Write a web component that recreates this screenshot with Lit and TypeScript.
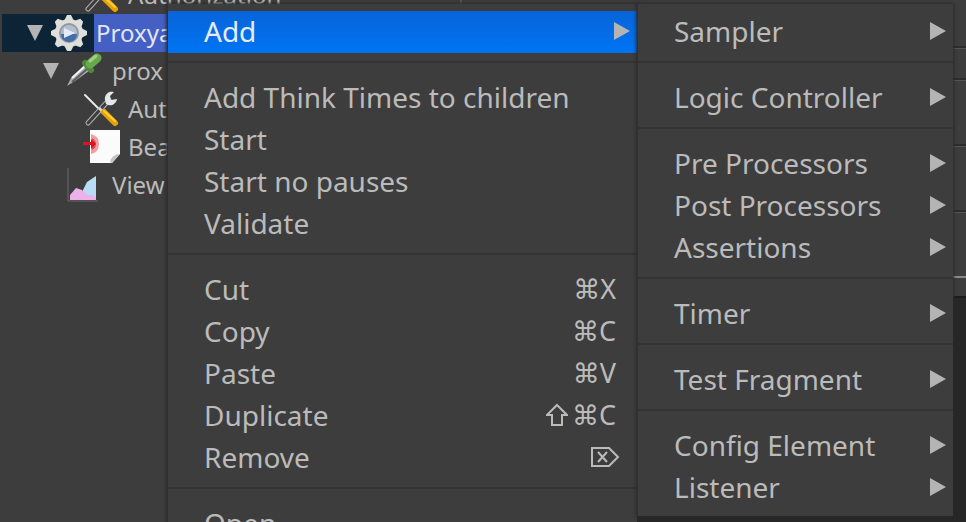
import { LitElement, html, css, svg, nothing, TemplateResult } from "lit";
import { customElement, property } from "lit/decorators.js";

interface Entry {
  label: string;
  keys?: string[];
  submenu?: boolean;
  active?: boolean;
}
type Item = Entry | "separator";

interface Node {
  label: string;
  icon: TemplateResult;
  level: number;
  open?: boolean;
  selected?: boolean;
}

const tools = html`<svg class="icon" viewBox="0 0 38 38" aria-hidden="true">
  <path d="M3 5L18 20" stroke="#e8e8e8" stroke-width="2" stroke-linecap="round" />
  <path d="M6 33L27 10" stroke="#b4b4b4" stroke-width="5" stroke-linecap="round" />
  <path d="M6 33L25 12" stroke="#3c3c3c" stroke-width="3" stroke-linecap="round" />
  <path d="M23 10a7 7 0 0 1 9-8l-4 4 1 4 6-1a7 7 0 0 1-11 5z" fill="#e4e8ea" />
  <path d="M17 18L22 23" stroke="#d8d8d8" stroke-width="3" />
  <path d="M22 22L33 33" stroke="#e8a208" stroke-width="6" stroke-linecap="round" />
  <path d="M22 21L33 31" stroke="#ffd03a" stroke-width="2" stroke-linecap="round" />
</svg>`;

const teeth = [0, 45, 90, 135, 180, 225, 270, 315];
const gear = html`<svg class="icon" viewBox="0 0 38 38" aria-hidden="true">
  <g fill="#dededa">
    ${teeth.map((a) => svg`<path d="M14 7L17 1h4l3 6z" transform="rotate(${a} 19 19)" />`)}
    <circle cx="19" cy="19" r="14" />
  </g>
  <circle cx="19" cy="19" r="10" fill="#9298a2" />
  <circle cx="19" cy="19" r="8" fill="#b4bfce" />
  <path d="M11 20a8 8 0 0 0 16 0z" fill="#426da9" />
  <path d="M14 14l11 5-11 5z" fill="#e4ecfa" />
</svg>`;

const dropper = html`<svg class="icon" viewBox="0 0 38 38" aria-hidden="true">
  <path d="M1 34L5 26 18 14l5 5L9 29z" fill="#a9adb0" />
  <path d="M6 30L21 17" stroke="#5a5d60" stroke-width="2" />
  <path d="M6 26L19 14" stroke="#f4f4f4" stroke-width="2" />
  <path d="M19 11l6 7" stroke="#4c8a35" stroke-width="6" stroke-linecap="round" />
  <path d="M24 12l7-6" stroke="#69a84d" stroke-width="9" stroke-linecap="round" />
  <path d="M24 9l6-5" stroke="#9fd083" stroke-width="3" stroke-linecap="round" />
</svg>`;

const script = html`<svg class="icon" viewBox="0 0 38 38" aria-hidden="true">
  <path d="M8 2h30v24l-8 9H8z" fill="#fbfbfb" />
  <path d="M38 26l-8 9-2-1q2-8 10-8z" fill="#c4c4c4" />
  <path d="M9 6q8 2 8 10t-8 10z" fill="#eea0a0" />
  <path d="M10 10q4 2 4 6t-4 6z" fill="#d95050" />
  <path d="M1 14h8v-3l5 5-5 5v-4H1z" fill="#e01420" />
</svg>`;

const chart = html`<svg class="icon" viewBox="0 0 38 38" aria-hidden="true">
  <path d="M2 2v33h30" stroke="#6a6a6a" stroke-width="1" fill="none" />
  <path d="M17 24l4-8 9-6v24H17z" fill="#b9dcf6" />
  <path d="M4 34v-5l6-7 6 2 5 5 5 0 4 3v2z" fill="#eeb0ea" />
</svg>`;

const shiftKey = html`<svg class="shift" viewBox="0 0 22 24" role="img" aria-label="Shift">
  <path d="M11 2L21 12H16V22H6V12H1z" />
</svg>`;

const deleteKey = html`<svg class="delete" viewBox="0 0 30 22" role="img" aria-label="Forward delete">
  <path d="M2 2H19L28 11 19 20H2zM8 6L17 16M17 6L8 16" />
</svg>`;

const keyShape = (key: string) =>
  key === "shift" ? shiftKey : key === "delete" ? deleteKey : html`<span>${key}</span>`;

@customElement("popup-menu")
class PopupMenu extends LitElement {
  @property({ attribute: false }) items: Item[] = [];

  static styles = css`
    :host {
      display: block;
      box-sizing: border-box;
      padding: 7px 0;
      background: #3d3d3d;
      border-left: 1px solid #303030;
      box-shadow: 0 0 3px 1px #2a2a2a;
    }
    .item {
      display: flex;
      align-items: center;
      width: 100%;
      height: 42px;
      margin: 0;
      padding: 0 7px 2px 36px;
      border: 0;
      background: none;
      color: #bbbbbb;
      font: 28px/40px "Noto Sans", "DejaVu Sans", sans-serif;
      text-align: left;
      white-space: nowrap;
    }
    .active {
      background: linear-gradient(#0864d8, #0074f4);
      color: #e4ecf8;
    }
    .label {
      flex: 1;
    }
    .keys {
      display: flex;
      align-items: center;
      padding-right: 14px;
      font-size: 27px;
    }
    .shift,
    .delete {
      fill: none;
      stroke: #bbbbbb;
      stroke-width: 2;
    }
    .shift {
      width: 22px;
      height: 24px;
      margin-right: 4px;
    }
    .delete {
      width: 30px;
      height: 22px;
      margin-right: -4px;
    }
    .arrow {
      width: 16px;
      height: 18px;
      fill: #b4b4b4;
    }
    .separator {
      height: 2px;
      margin: 8px 0 14px;
      border: 0;
      background: #333333;
    }
  `;

  render() {
    return this.items.map((item) =>
      item === "separator"
        ? html`<hr class="separator" />`
        : html`<button class="item ${item.active ? "active" : ""}" role="menuitem">
            <span class="label">${item.label}</span>
            ${item.keys ? html`<span class="keys">${item.keys.map(keyShape)}</span>` : nothing}
            ${item.submenu
              ? html`<svg class="arrow" viewBox="0 0 16 18" aria-hidden="true"><path d="M0 0l16 9-16 9z" /></svg>`
              : nothing}
          </button>`
    );
  }
}

@customElement("app-root")
class AppRoot extends LitElement {
  private nodes: Node[] = [
    { label: "Authorization", icon: tools, level: 2 },
    { label: "Proxya", icon: gear, level: 0, open: true, selected: true },
    { label: "prox", icon: dropper, level: 1, open: true },
    { label: "Aut", icon: tools, level: 2 },
    { label: "Bea", icon: script, level: 2 },
    { label: "View", icon: chart, level: 1 },
  ];

  private main: Item[] = [
    { label: "Add", submenu: true, active: true },
    "separator",
    { label: "Add Think Times to children" },
    { label: "Start" },
    { label: "Start no pauses" },
    { label: "Validate" },
    "separator",
    { label: "Cut", keys: ["⌘", "X"] },
    { label: "Copy", keys: ["⌘", "C"] },
    { label: "Paste", keys: ["⌘", "V"] },
    { label: "Duplicate", keys: ["shift", "⌘", "C"] },
    { label: "Remove", keys: ["delete"] },
    "separator",
    { label: "Open" },
  ];

  private add: Item[] = [
    { label: "Sampler", submenu: true },
    "separator",
    { label: "Logic Controller", submenu: true },
    "separator",
    { label: "Pre Processors", submenu: true },
    { label: "Post Processors", submenu: true },
    { label: "Assertions", submenu: true },
    "separator",
    { label: "Timer", submenu: true },
    "separator",
    { label: "Test Fragment", submenu: true },
    "separator",
    { label: "Config Element", submenu: true },
    { label: "Listener", submenu: true },
  ];

  static styles = css`
    :host {
      display: flex;
      position: relative;
      height: 100vh;
      overflow: hidden;
      background: #3d3d3d;
      color: #bbbbbb;
      font: 24px/38px "Noto Sans", sans-serif;
    }
    .tree {
      flex: none;
      box-sizing: border-box;
      width: 462px;
      margin-top: -24px;
      padding-left: 2px;
      border-right: 2px solid #555555;
    }
    .node {
      display: flex;
      align-items: center;
      height: 38px;
      padding-left: 24px;
      white-space: nowrap;
    }
    .level1 {
      padding-left: 40px;
    }
    .level2 {
      padding-left: 80px;
    }
    .selected {
      background: #0d2436;
      color: #e0e6f4;
    }
    .toggle {
      width: 18px;
      height: 16px;
      margin-right: 6px;
      fill: #b4b4b4;
    }
    .icon {
      width: 38px;
      height: 38px;
    }
    .name {
      margin-left: 6px;
      padding: 0 2px;
    }
    .selected .name {
      flex: 1;
      background: #4460c4;
    }
    .panel {
      display: flex;
      flex-direction: column;
      flex: 1;
    }
    .field {
      box-sizing: border-box;
      border-top: 2px solid #2c2c2c;
      box-shadow: inset 0 1px #555555;
    }
    .head {
      height: 46px;
    }
    .short {
      height: 32px;
    }
    .tall {
      height: 66px;
    }
    .last {
      height: 18px;
      border-top: 2px solid #8a8a8a;
    }
    .editor {
      flex: 1;
      border-top: 2px solid #1c1c1c;
      background: #272727;
    }
    .menus {
      display: flex;
      align-items: flex-start;
      position: absolute;
      top: 4px;
      left: 167px;
    }
    .main {
      width: 470px;
    }
    .sub {
      width: 316px;
    }
  `;

  render() {
    return html`
      <div class="tree" role="tree">
        ${this.nodes.map(
          (n) => html`<div class="node level${n.level} ${n.selected ? "selected" : ""}" role="treeitem">
            ${n.level < 2
              ? html`<svg class="toggle" viewBox="0 0 18 16" aria-hidden="true">
                  ${n.open ? svg`<path d="M1 0h16L9 16z" />` : nothing}
                </svg>`
              : nothing}
            ${n.icon}<span class="name">${n.label}</span>
          </div>`
        )}
      </div>
      <div class="panel">
        <div class="head"></div>
        <div class="field short"></div>
        <div class="field tall"></div>
        <div class="field tall"></div>
        <div class="field tall"></div>
        <div class="last"></div>
        <div class="editor"></div>
      </div>
      <div class="menus">
        <popup-menu class="main" role="menu" .items=${this.main}></popup-menu>
        <popup-menu class="sub" role="menu" .items=${this.add}></popup-menu>
      </div>
    `;
  }
}
